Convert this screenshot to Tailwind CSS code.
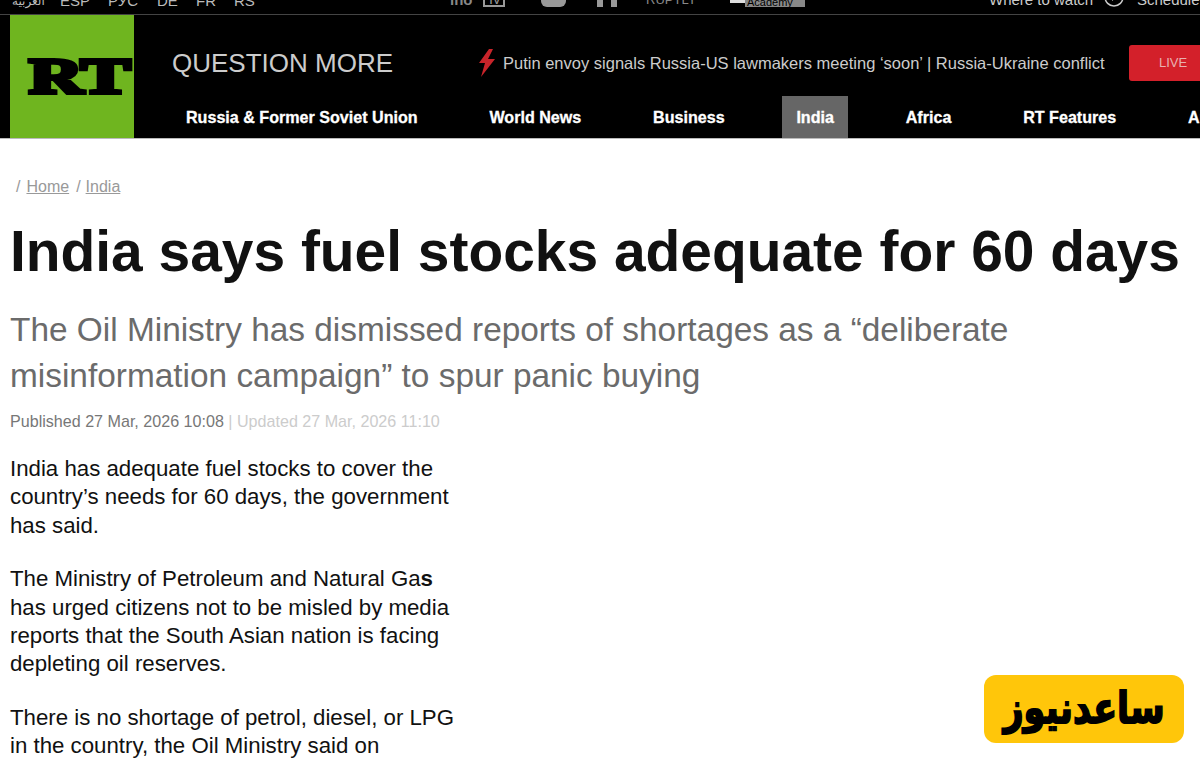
<!DOCTYPE html>
<html lang="en">
<head>
    <meta charset="UTF-8">
    <title>India says fuel stocks adequate for 60 days</title>
    <script src="https://cdn.jsdelivr.net/npm/@tailwindcss/browser@4"></script>
</head>
<body class="bg-white h-[759px] w-[1200px] overflow-hidden relative font-['Liberation_Sans',sans-serif]">

    <header class="bg-black h-[139px] border-b border-[#bbb] overflow-hidden">
        <!-- top strip, the screenshot cuts it off -->
        <div class="h-[15px] border-b border-[#444] overflow-hidden flex items-end text-[#bbb] text-[15px] leading-[20px] whitespace-nowrap">
            <div class="flex w-[430px] mb-[3px]">
                <span class="ml-[12px] w-[48px] text-[12px] font-['DejaVu_Sans',sans-serif]">العربية</span>
                <span class="w-[48px]">ESP</span>
                <span class="w-[49px]">РУС</span>
                <span class="w-[39px]">DE</span>
                <span class="w-[38px]">FR</span>
                <span>RS</span>
            </div>
            <div class="flex items-end w-[559px] text-[#888] mb-[7px]">
                <span class="ml-[20px] w-[33px] font-bold text-[15px] mb-[-3px]">ino</span>
                <span class="w-[22px] h-[7px] border-x-2 border-b-2 border-[#999] text-[#999] text-[9px] leading-[3px] text-center font-bold mr-[36px]">TV</span>
                <span class="w-[25px] h-[7px] bg-[#999] rounded-b-[6px] mr-[31px]"></span>
                <span class="w-[20px] h-[8px] border-x-[6px] border-[#999] mr-[29px]"></span>
                <span class="w-[84px] text-[13px] mb-[-3px]">RUPTLY</span>
                <span class="w-[15px] h-[3px] bg-[#ddd] mb-[4px]"></span>
                <span class="w-[60px] h-[7px] bg-[#888] text-black text-[11px] leading-[4px] pl-[2px]">Academy</span>
            </div>
            <div class="flex items-end">
                <span class="w-[115px] text-[#ccc] text-[15px] mb-[4px]">Where to watch</span>
                <svg class="w-[20px] h-[20px] mb-[7px] mr-[13px] shrink-0" viewBox="0 0 20 20" fill="none" stroke="#ccc" stroke-width="1.5"><circle cx="10" cy="10" r="9"/><path d="M8 6l5 4-5 4z" fill="#ccc" stroke="none"/></svg>
                <span class="text-[#ccc] text-[15px] mb-[4px]">Schedule</span>
            </div>
        </div>

        <div class="flex h-[123px]">
            <div class="ml-[10px] w-[124px] h-[123px] bg-[#6fb51f] shrink-0 overflow-hidden relative">
                <span class="absolute left-[19px] top-[16px] text-black font-bold font-['Liberation_Serif',serif] text-[50px] leading-[90px] [-webkit-text-stroke:4px_black] origin-left scale-x-[1.5]">RT</span>
            </div>
            <div class="flex-1 min-w-0 pl-[38px]">
                <div class="flex items-center h-[81px] pt-[15px] whitespace-nowrap">
                    <span class="text-[#ccc] text-[26px] w-[306px] shrink-0">QUESTION MORE</span>
                    <svg class="w-[18px] h-[28px] mr-[7px] shrink-0" viewBox="0 0 18 28"><path d="M11 0L1 14h6L3 28 17 10h-7l5-10z" fill="#c8242a"/></svg>
                    <span class="text-[#ccc] text-[16.5px] w-[626px] shrink-0">Putin envoy signals Russia-US lawmakers meeting ‘soon’ | Russia-Ukraine conflict</span>
                    <span class="bg-[#d3202a] text-[#e8b0b0] text-[13px] h-[36px] w-[90px] rounded-[3px] pl-[30px] flex items-center shrink-0">LIVE</span>
                </div>
                <nav class="flex gap-[43.8px] text-white font-bold text-[16.1px] h-[42px] whitespace-nowrap [-webkit-text-stroke:0.3px_white]">
                    <a class="px-[14px] pt-[1px] flex items-center">Russia &amp; Former Soviet Union</a>
                    <a class="px-[14px] pt-[1px] flex items-center">World News</a>
                    <a class="px-[14px] pt-[1px] flex items-center">Business</a>
                    <a class="px-[14px] pt-[1px] flex items-center bg-[#666]">India</a>
                    <a class="px-[14px] pt-[1px] flex items-center">Africa</a>
                    <a class="px-[14px] pt-[1px] flex items-center">RT Features</a>
                    <a class="px-[14px] pt-[1px] flex items-center">Analysis</a>
                </nav>
            </div>
        </div>
    </header>

    <main class="pl-[10px]">
        <div class="pt-[38px] pl-[6px] text-[16px] leading-[20px] text-[#999] flex gap-[4px]">
            <span class="mr-[2px]">/</span><a class="underline">Home</a><span class="ml-[3px] mr-[1px]">/</span><a class="underline">India</a>
        </div>
        <h1 class="mt-[21px] text-[56.9px] leading-[66px] font-bold text-[#111] whitespace-nowrap">India says fuel stocks adequate for 60 days</h1>
        <h2 class="mt-[23px] w-[1040px] text-[33.4px] leading-[46px] text-[#6b6b6b]">The Oil Ministry has dismissed reports of shortages as a “deliberate misinformation campaign” to spur panic buying</h2>
        <div class="mt-[12px] text-[16.1px] leading-[20px] text-[#777]">Published 27 Mar, 2026 10:08 <span class="text-[#ccc]">| Updated 27 Mar, 2026 11:10</span></div>
        <article class="mt-[24px] w-[450px] text-[22.25px] leading-[28.3px] text-[#111] space-y-[25.5px]">
            <p>India has adequate fuel stocks to cover the country’s needs for 60 days, the government has said.</p>
            <p>The Ministry of Petroleum and Natural Ga<b>s</b> has urged citizens not to be misled by media reports that the South Asian nation is facing depleting oil reserves.</p>
            <p>There is no shortage of petrol, diesel, or LPG in the country, the Oil Ministry said on Thursday.</p>
        </article>
    </main>

    <!-- watermark over the page -->
    <div class="absolute left-[984px] top-[675px] w-[200px] h-[68px] rounded-[12px] bg-[#ffc60a] flex items-center justify-center text-black font-bold text-[35px] font-['DejaVu_Sans',sans-serif] [-webkit-text-stroke:1.5px_black]" dir="rtl"><span class="scale-y-[1.25] mt-[-2px]">ساعدنیوز</span></div>
</body>
</html>
